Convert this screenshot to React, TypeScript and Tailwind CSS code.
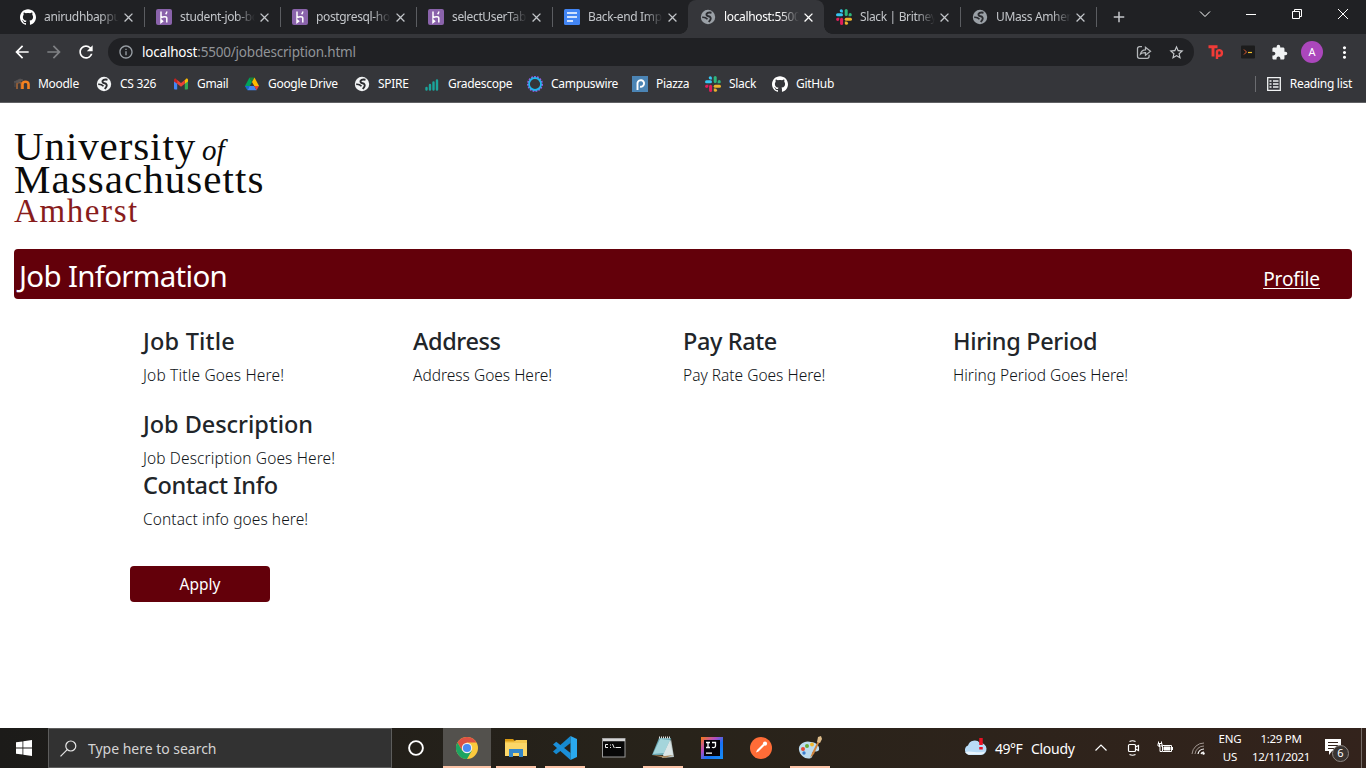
import React from "react";
import { MdArrowBack, MdArrowForward, MdRefresh, MdInfoOutline, MdStarBorder, MdExtension, MdMoreVert, MdClose, MdAdd } from "react-icons/md";
import { SiGithub } from "react-icons/si";

function Globe({ className = "" }: { className?: string }) {
  return (
    <svg viewBox="0 0 16 16" className={"size-4 shrink-0 " + className}>
      <circle cx="8" cy="8" r="7.2" fill="currentColor" />
      <path d="M11.500 3.800Q7.500 3 6.500 5q-.3 1.800 2 2.300 3 .7 2 3.200L8.800 13" fill="none" stroke="#2b2c30" strokeWidth="1.900" />
      <path d="M2.200 8.300q3.300-.3 5.300 2" fill="none" stroke="#2b2c30" strokeWidth="1.700" />
    </svg>
  );
}
function Heroku() {
  return (
    <svg viewBox="0 0 16 16" className="size-4 shrink-0">
      <rect width="16" height="16" rx="2" fill="#8a63ab" />
      <path d="M5 2.500v6.200c1.700-.8 5.800-1.700 5.800.4v4.400M10.800 2.500c0 1.200-.5 2-1.200 2.800M5 10.800v2.700l1.600-1.350z" fill="none" stroke="#fff" strokeWidth="1.5" />
    </svg>
  );
}
function Docs() {
  return (
    <svg viewBox="0 0 16 16" className="size-4 shrink-0">
      <rect width="16" height="16" rx="1.5" fill="#4285f4" />
      <path d="M3 4h10M3 8h10M3 12h6" stroke="#fff" strokeWidth="1.7" />
    </svg>
  );
}
function Slack() {
  return (
    <svg viewBox="0 0 16 16" className="size-4 shrink-0">
      <g fill="#36c5f0"><rect x="0" y="4.3" width="7" height="3" rx="1.5" /><path d="M6.900 3.400V1.700a1.600 1.600 0 1 0-1.600 1.700z" /></g>
      <g fill="#2eb67d"><rect x="8.7" y="0" width="3" height="7" rx="1.5" /><path d="M12.600 7.300h1.700a1.600 1.600 0 1 0-1.700-1.600z" /></g>
      <g fill="#ecb22e"><rect x="8.7" y="8.7" width="7.3" height="3" rx="1.5" /><path d="M8.800 12.600v1.700a1.600 1.600 0 1 0 1.600-1.700z" /></g>
      <g fill="#e01e5a"><rect x="4.1" y="8.7" width="3" height="7.3" rx="1.5" /><path d="M3.300 8.700H1.600a1.600 1.600 0 1 0 1.700 1.600z" /></g>
    </svg>
  );
}
function Moodle() {
  return (
    <svg viewBox="0 0 16 16" className="size-4 shrink-0">
      <path d="M3 13V8.500a2 2 0 0 1 4.500 0V13" fill="none" stroke="#8d5c38" strokeWidth="2" />
      <path d="M8.500 13V8.300c0-3.400 6-3.400 6 0V13" fill="none" stroke="#f48120" strokeWidth="2.600" />
      <path d="M0 6l6-3 3 1-5 2.500zM1 6v5" fill="#595656" stroke="#595656" strokeWidth=".8" />
    </svg>
  );
}
function Gmail() {
  return (
    <svg viewBox="0 0 16 16" className="size-4 shrink-0">
      <path d="M1 4v8.600c0 .5.400.9.900.9h2.300V7.200z" fill="#4285f4" />
      <path d="M15 4v8.600c0 .5-.4.9-.9.9h-2.300V7.200z" fill="#34a853" />
      <path d="M1 4v1.400l3.200 2.400V4.200L3.200 3C2.200 2.100 1 2.800 1 4z" fill="#c5221f" />
      <path d="M15 4v1.400l-3.200 2.400V4.200l1-1.200C13.800 2.100 15 2.800 15 4z" fill="#fbbc04" />
      <path d="M4.200 7.800V4L8 6.900 11.800 4v3.800L8 10.700z" fill="#ea4335" />
    </svg>
  );
}
function Drive() {
  return (
    <svg viewBox="0 0 16 16" className="size-4 shrink-0">
      <path d="M5.500 1.500 8 5.900 3.500 14.300 1 10z" fill="#00a35a" />
      <path d="M5.500 1.500h5L8 5.900z" fill="#188038" />
      <path d="M10.500 1.500 15 10h-4.700L8 5.900z" fill="#ffba00" />
      <path d="M1 10h4.700l-2.200 4.300z" fill="#1967d2" />
      <path d="M5.700 10h4.600l2.200 4.300h-9z" fill="#4285f4" />
      <path d="M10.300 10H15l-2.500 4.300z" fill="#ea4335" />
    </svg>
  );
}
function Gradescope() {
  return (
    <svg viewBox="0 0 16 16" className="size-4 shrink-0">
      <path d="M2.500 13.500v-1.500M6 13.500V9M9.500 13.500V6.500M13 13.500v-9" stroke="#1ba59c" strokeWidth="2.400" strokeLinecap="round" />
    </svg>
  );
}
function Campuswire() {
  return (
    <svg viewBox="0 0 16 16" className="size-4 shrink-0">
      <circle cx="8" cy="8" r="7" fill="none" stroke="#9a5be8" strokeWidth="2" strokeDasharray="1.700 1.200" />
      <circle cx="8" cy="8" r="6" fill="none" stroke="#21b6ed" strokeWidth="1.800" />
    </svg>
  );
}
function Piazza() {
  return (
    <svg viewBox="0 0 16 16" className="size-4 shrink-0">
      <rect width="16" height="16" fill="#4b84b4" />
      <path d="M5.500 14V7a3.300 3.300 0 1 1 2.500 3.700" fill="none" stroke="#fff" strokeWidth="1.900" />
    </svg>
  );
}

type TabProps = { icon: React.ReactNode; title: string; active?: boolean; sep?: boolean };
function Tab({ icon, title, active, sep }: TabProps) {
  return (
    <div className={"relative flex h-[34px] w-[136px] shrink-0 items-center pl-3 " + (active ? "rounded-t-lg bg-[#35363a]" : "")}>
      {icon}
      <span className={"ml-2 w-[75px] overflow-hidden whitespace-nowrap text-[12px] leading-4 tracking-[-0.350px] [mask-image:linear-gradient(to_right,#000_75%,transparent)] " + (active ? "text-white" : "text-[#c3c6ca]")}>{title}</span>
      <MdClose className={"ml-[2px] size-[15px] shrink-0 " + (active ? "text-white" : "text-[#c3c6ca]")} />
      {sep && <span className="absolute right-[-1px] top-[7px] h-5 w-px bg-[#5b5d61]" />}
      {active && (
        <>
          <span className="absolute -left-2 bottom-0 size-2 bg-[radial-gradient(circle_at_0_0,transparent_7.500px,#35363a_8px)]" />
          <span className="absolute -right-2 bottom-0 size-2 bg-[radial-gradient(circle_at_100%_0,transparent_7.500px,#35363a_8px)]" />
        </>
      )}
    </div>
  );
}

function Bookmark({ icon, label, w }: { icon: React.ReactNode; label: string; w: string }) {
  return (
    <div className={"flex shrink-0 items-center gap-2 whitespace-nowrap text-[12px] leading-4 text-white " + w}>
      {icon}
      <span className="tracking-[-0.3px]">{label}</span>
    </div>
  );
}

function Browser() {
  return (
    <header>
      <div className="flex h-[34px] bg-[#202124] pl-2">
        <Tab icon={<SiGithub className="size-4 shrink-0 text-white" />} title="anirudhbappu/student" sep />
        <Tab icon={<Heroku />} title="student-job-board" sep />
        <Tab icon={<Heroku />} title="postgresql-horizontal" sep />
        <Tab icon={<Heroku />} title="selectUserTable" sep />
        <Tab icon={<Docs />} title="Back-end Implement" />
        <Tab icon={<Globe className="text-[#9aa0a6]" />} title="localhost:5500/job" active />
        <Tab icon={<Slack />} title="Slack | Britney Spears" sep />
        <Tab icon={<Globe className="text-[#9aa0a6]" />} title="UMass Amherst" sep />
        <div className="flex w-[46px] items-center justify-center text-[#c3c6ca]"><MdAdd className="size-[18px]" /></div>
        <div className="ml-auto flex h-7 items-center text-white">
          <svg viewBox="0 0 12 12" className="mr-[35px] size-3" fill="none" stroke="currentColor"><path d="m1 3.500 5 5 5-5" /></svg>
          <svg viewBox="0 0 10 10" className="mr-9 size-[10px]" fill="none" stroke="currentColor"><path d="M0 5.500h10" /></svg>
          <svg viewBox="0 0 10 10" className="mr-9 size-[10px]" fill="none" stroke="currentColor"><path d="M.500 2.500h7v7h-7zM2.500 2.500v-2h7v7h-2" /></svg>
          <svg viewBox="0 0 10 10" className="mr-[18px] size-[10px]" fill="none" stroke="currentColor"><path d="m0 0 10 10M10 0 0 10" /></svg>
        </div>
      </div>
      <div className="flex h-[34px] items-center bg-[#35363a] pt-0.5 pl-[12px]">
        <MdArrowBack className="size-[20px] text-white" />
        <MdArrowForward className="ml-[12px] size-[20px] text-[#7f8184]" />
        <MdRefresh className="ml-[12px] size-5 text-white" />
        <div className="ml-3 flex h-7 w-[1086px] items-center rounded-full bg-[#202124] pl-[10px]">
          <MdInfoOutline className="size-4 text-[#9aa0a6]" />
          <span className="ml-2 whitespace-nowrap text-[13.500px] leading-5 tracking-[-0.200px] text-[#919498]"><span className="text-white">localhost</span>:5500/jobdescription.html</span>
          <svg viewBox="0 0 16 16" className="mr-4 ml-auto size-4" fill="none" stroke="#b4b7ba" strokeWidth="1.300"><path d="M6 2.700H3.500a2 2 0 0 0-2 2v7.600a2 2 0 0 0 2 2h7.600a2 2 0 0 0 2-2v-1.500M4.500 10c.6-2.900 2.300-4.100 5-4.200V3.300L14.500 7.300l-5 3.900V8.600C7.400 8.500 5.800 8.900 4.500 10z" /></svg>
          <MdStarBorder className="mr-[9px] size-[17px] text-[#c6c9cc]" />
        </div>
        <svg viewBox="0 0 16 16" className="ml-[14px] size-4" fill="none" stroke="#f03b37" strokeWidth="2.900"><path d="M.500 2.700h9M5 2.700v9.800" /><path d="M9 15V7.800c0-2.400 4.900-2.400 4.900 1.100 0 3.300-3.300 3.400-4.900 2" strokeWidth="2.400" /></svg>
        <svg viewBox="0 0 16 16" className="ml-4 size-4"><rect x="1" y="1.5" width="14" height="13" rx="1" fill="#1c1c1c" /><path d="m4 5.500 2.500 2.500L4 10.500" fill="none" stroke="#e05a2e" /><path d="M8 8.500h4" stroke="#f5c32c" strokeWidth="1.200" /></svg>
        <MdExtension className="ml-[15px] size-[17px] text-[#f1f3f4]" />
        <span className="ml-[13px] flex size-[22px] items-center justify-center rounded-full bg-[#ab47bc] text-[11px] text-white">A</span>
        <MdMoreVert className="ml-3 size-[19px] text-white" />
      </div>
      <div className="flex h-[35px] items-center border-b border-[#606164] bg-[#35363a] pb-[3px] pl-[14px]">
        <Bookmark w="w-[82px]" icon={<Moodle />} label="Moodle" />
        <Bookmark w="w-[77px]" icon={<Globe className="text-[#f1f3f4]" />} label="CS 326" />
        <Bookmark w="w-[71px]" icon={<Gmail />} label="Gmail" />
        <Bookmark w="w-[110px]" icon={<Drive />} label="Google Drive" />
        <Bookmark w="w-[70px]" icon={<Globe className="text-[#f1f3f4]" />} label="SPIRE" />
        <Bookmark w="w-[103px]" icon={<Gradescope />} label="Gradescope" />
        <Bookmark w="w-[105px]" icon={<Campuswire />} label="Campuswire" />
        <Bookmark w="w-[73px]" icon={<Piazza />} label="Piazza" />
        <Bookmark w="w-[67px]" icon={<Slack />} label="Slack" />
        <Bookmark w="w-[80px]" icon={<SiGithub className="size-4 text-white" />} label="GitHub" />
        <div className="ml-auto mr-[14px] flex items-center">
          <span className="h-4 w-px bg-[#6b6c70]" />
          <svg viewBox="0 0 16 16" className="mr-2 ml-[10px] size-4" fill="none" stroke="#f1f3f4" strokeWidth="1.300"><path d="M1.700 1.700h12.600v12.600H1.700z" /><path d="M3.500 5h2M7 5h5.500M3.500 8h2M7 8h5.500M3.500 11h2M7 11h5.500" /></svg>
          <span className="whitespace-nowrap text-[12px] leading-4 tracking-[-0.280px] text-white">Reading list</span>
        </div>
      </div>
    </header>
  );
}

function Field({ title, text, titleTracking = "", tracking = "" }: { title: string; text: string; titleTracking?: string; tracking?: string }) {
  return (
    <section className="w-[270px] whitespace-nowrap">
      <h2 className={"mb-[7px] text-[23.500px] leading-[29px] font-medium " + titleTracking}>{title}</h2>
      <p className={"pb-px text-[15.500px] leading-6 font-light text-[#101418] " + tracking}>{text}</p>
    </section>
  );
}

function Page() {
  return (
    <main className="flex-1 overflow-hidden bg-white px-[14px] text-[#212529]">
      <div className="h-[146px] pt-[27px] font-['Liberation_Serif',serif] text-[41px] leading-[33px] text-[#0b0b0b]">
        <div className="h-[33px] whitespace-nowrap tracking-[0.900px]">University<i className="ml-[6px] text-[29px] leading-none tracking-normal">of</i></div>
        <div className="h-[33px] whitespace-nowrap tracking-[1.050px]">Massachusetts</div>
        <div className="text-[33px] leading-[30px] tracking-[1.600px] text-[#881c1c]">Amherst</div>
      </div>
      <div className="flex h-[50px] justify-between rounded-[4px] bg-[#63000a] pr-8 pl-[5px] text-white">
        <h1 className="text-[29.500px] leading-[54px] tracking-[-0.700px]">Job Information</h1>
        <a className="text-[19px] leading-[60px] tracking-[-0.100px] underline underline-offset-2">Profile</a>
      </div>
      <div className="flex pt-7 pl-[129px]">
        <Field title="Job Title" text="Job Title Goes Here!" titleTracking="tracking-[0.200px]" tracking="tracking-[0.170px]" />
        <Field title="Address" text="Address Goes Here!" titleTracking="tracking-[-0.400px]" />
        <Field title="Pay Rate" text="Pay Rate Goes Here!" titleTracking="tracking-[-0.400px]" />
        <Field title="Hiring Period" text="Hiring Period Goes Here!" titleTracking="tracking-[-0.350px]" />
      </div>
      <div className="pt-[22px] pl-[129px]">
        <Field title="Job Description" text="Job Description Goes Here!" titleTracking="tracking-[-0.050px]" tracking="tracking-[0.120px]" />
        <Field title="Contact Info" text="Contact info goes here!" titleTracking="tracking-[-0.350px]" tracking="tracking-[0.080px]" />
      </div>
      <button className="mt-[34px] ml-[116px] h-9 w-[140px] rounded-[4px] bg-[#63000a] pt-px text-[15.500px] text-white">Apply</button>
    </main>
  );
}

function Slot({ children, line, active, w = "w-[49px]" }: { children: React.ReactNode; line?: boolean; active?: boolean; w?: string }) {
  return (
    <div className={"flex h-10 shrink-0 flex-col items-center " + w + (active ? " bg-[#53514d]" : "")}>
      <div className="flex h-[38px] items-center pt-0.5">{children}</div>
      {line && <span className={"h-0.5 bg-[#fbc3a6] " + (active ? "w-full" : "w-10")} />}
    </div>
  );
}

function Taskbar() {
  return (
    <footer className="flex h-10 shrink-0 items-center bg-linear-to-r from-[#1c1b19] via-[#28231a] to-[#33231c] text-white">
      <div className="flex w-12 justify-center">
        <svg viewBox="0 0 16 16" className="size-4" fill="#fff"><path d="M0 2.300 6.500 1.400v6.200H0zM7.300 1.300 16 0v7.600H7.300zM0 8.400h6.500v6.200L0 13.700zM7.300 8.400H16V16l-8.700-1.300z" /></svg>
      </div>
      <div className="flex h-10 w-[344px] items-center border border-[#5d5d5c] bg-[#323232] pl-[11px]">
        <svg viewBox="0 0 17 17" className="size-[17px]" fill="none" stroke="#e8e8e8" strokeWidth="1.200"><circle cx="10.8" cy="6" r="5" /><path d="m7.200 9.600-6.700 6.700" /></svg>
        <span className="ml-[11px] whitespace-nowrap text-[14px] tracking-[-0.020px] text-[#d4d4d4]">Type here to search</span>
      </div>
      <Slot w="w-[51px] pr-[3px]"><svg viewBox="0 0 16 16" className="size-4" fill="none" stroke="#fff" strokeWidth="1.900"><circle cx="8" cy="8" r="6.9" /></svg></Slot>
      <Slot w="w-12" line active>
        <svg viewBox="0 0 22 22" className="size-[22px]">
          <circle cx="11" cy="11" r="11" fill="#fbc93d" />
          <path d="M1.470 5.500A11 11 0 0 1 20.530 5.500H11L6.240 13.750z" fill="#dd5144" />
          <path d="M1.470 5.500A11 11 0 0 0 11 22l4.760-8.250H6.240z" fill="#1da462" />
          <circle cx="11" cy="11" r="5.2" fill="#f1f1f1" /><circle cx="11" cy="11" r="4.1" fill="#4a8af4" />
        </svg>
      </Slot>
      <Slot line>
        <svg viewBox="0 0 24 24" className="size-6"><path d="M1 3h8l2 2v3H1z" fill="#d99a12" /><path d="M1 6h22v14H1z" fill="#fbd768" /><path d="M1 5.500h9l2-1.500h11v3H1z" fill="#f6c94f" /><path d="M5 21v-8h14v8h-4v-4H9v4z" fill="#3487c9" /></svg>
      </Slot>
      <Slot line>
        <svg viewBox="0 0 24 24" className="size-6"><path d="M17.500 0v7L3.200 18.200 0 15.500z" fill="#1689cf" /><path d="M17.500 24v-7L3.200 5.800 0 8.500z" fill="#1b8fd9" /><path d="M17.500 0 24 3v18l-6.500 3z" fill="#2aa9ef" /></svg>
      </Slot>
      <Slot>
        <svg viewBox="0 0 24 20" className="h-5 w-6"><rect x=".5" y=".5" width="22.5" height="18.5" fill="#070707" stroke="#999" /><path d="M1 2h22" stroke="#d5d5d5" strokeWidth="2.500" /><path d="M6 6.500H3.500v3H6M8.500 6.500v1M8.500 9v1M10.500 6l1.800 4M13.500 9.500H19" fill="none" stroke="#eee" strokeWidth="1" /></svg>
      </Slot>
      <Slot line>
        <svg viewBox="0 0 24 24" className="size-6"><path d="M20 3l3 18-12 1z" fill="#b8c4c4" /><path d="M8 2h12l-5 17H1z" fill="#6aa6b1" /><path d="m9 3 10 1-6 13-11 1z" fill="#a4d5db" /><path d="M19 4l3 15-8 2-2-2z" fill="#dbe6e6" /><path d="m1 19 13 1 8-1-8 3z" fill="#a7865a" /><path d="M8 1.500h12" stroke="#e1e4e4" strokeWidth="2" strokeDasharray="1 1" /></svg>
      </Slot>
      <Slot>
        <svg viewBox="0 0 22 22" className="size-[22px]">
          <defs><linearGradient id="ij" x1="0" y1="0" x2="1" y2="1"><stop stopColor="#f97a12" /><stop offset=".35" stopColor="#b44cc0" /><stop offset=".6" stopColor="#1772f6" /><stop offset="1" stopColor="#178ff6" /></linearGradient></defs>
          <rect width="22" height="22" fill="url(#ij)" /><rect x="3" y="3" width="16" height="16" fill="#050208" /><path d="M5 5.500h4M7 5.500v5M5 10.500h4M11 5.500h3.500v3.500c0 1.500-2 2-3.500 1.200M5 16.200h6" fill="none" stroke="#fff" strokeWidth="1.300" />
        </svg>
      </Slot>
      <Slot>
        <svg viewBox="0 0 22 22" className="size-[22px]"><circle cx="11" cy="11" r="11" fill="#ff6c37" /><path d="m6 15.500 1-2.500 6-6 1.500 1.500-6 6z" fill="#fff" /><circle cx="15" cy="6.7" r="2.1" fill="#fff" /></svg>
      </Slot>
      <Slot line>
        <svg viewBox="0 0 24 24" className="size-6"><path d="M1 14C0 8 7 4 13 6c5 0 9 4 8 8-1 2-4 1-6 2-2 2 1 4-2 6C8 24 2 20 1 14z" fill="#bcdcef" /><circle cx="5" cy="13" r="2" fill="#e34834" /><circle cx="9" cy="10" r="2" fill="#67ac3b" /><circle cx="14" cy="8.5" r="1.9" fill="#f1b72c" /><circle cx="6" cy="17" r="1.7" fill="#3c7fd0" /><path d="m12 22 2-5 6-12 1.500 1-5.500 12z" fill="#cf843d" /><path d="m19 6 1-5 3-1 1 3-2 4z" fill="#dfbd8a" /></svg>
      </Slot>
      <div className="ml-auto flex h-10 items-center">
        <svg viewBox="0 0 24 18" className="mb-0.5 h-[18px] w-6"><path d="M6 17a5 5 0 0 1-1-9.500A7 7 0 0 1 17 5a6 6 0 0 1 1 12z" fill="#b9dcf7" /><path d="M5 16.500h13a4.500 4.500 0 0 0 4-3C15 16 8 12 2 14z" fill="#eaf5fd" /><path d="M18 0v7M18 9v2.500" stroke="#e81123" strokeWidth="3.500" /></svg>
        <span className="ml-2 w-9 whitespace-nowrap pt-px text-[14px] tracking-[-0.500px]">49°F</span>
        <span className="w-[64px] whitespace-nowrap pt-px text-[14px] tracking-[-0.300px]">Cloudy</span>
        <svg viewBox="0 0 12 12" className="size-3" fill="none" stroke="#fff" strokeWidth="1.200"><path d="m.500 8.500 5.500-5.500 5.500 5.500" /></svg>
        <svg viewBox="0 0 16 16" className="ml-[18px] size-4" fill="none" stroke="#fff" strokeWidth="1.200"><rect x="3.5" y="4.5" width="7" height="7" rx="1" /><path d="m10.500 7 3-1.500v5l-3-1.500M4.500 1.500q3-1.500 6 0M4.500 14.500q3 1.500 6 0" /></svg>
        <svg viewBox="0 0 16 16" className="ml-4 size-4" fill="none" stroke="#fff"><path d="M5.500 5.500h9v6h-9zM2.500 4v3M1 3.500h4v2.500H1zM3 7v4.500h2M1.500 1.500V3M4.500 1.500V3M15.500 7v3" /><path d="M7 7h6v3H7z" fill="#fff" /></svg>
        <svg viewBox="0 0 14 14" className="ml-[18px] size-[14px]" fill="none"><g stroke="#a09690" strokeWidth="1"><path d="M1 13A12 12 0 0 1 13 2" /><path d="M4 13a9 9 0 0 1 9-8" /></g><path d="M7 13a6 6 0 0 1 6-5M10 13a3 3 0 0 1 3-2" stroke="#fff" strokeWidth="1.200" /><circle cx="12.5" cy="12.5" r="1.2" fill="#fff" /></svg>
        <div className="ml-[11px] w-7 text-center text-[11.500px] leading-[18px] tracking-[-0.200px]">ENG<br />US</div>
        <div className="ml-[6px] w-[62px] whitespace-nowrap text-center text-[11.500px] leading-[18px] tracking-[-0.300px]">1:29 PM<br />12/11/2021</div>
        <div className="relative ml-[13px] h-7 w-[36px]">
          <svg viewBox="0 0 26 26" className="size-[26px]"><path d="M0 5h16v12H7l-3 4v-4H0z" fill="#fff" /><path d="M3 8.500h10M3 11.500h10M3 14.500h7" stroke="#33231c" /></svg>
          <span className="absolute left-[7px] top-[11px] flex size-[17px] items-center justify-center rounded-full border border-[#8e8783] bg-[#3a3431] text-[11px]">6</span>
        </div>
        <span className="mr-1 h-10 w-px bg-[#756c67]" />
      </div>
    </footer>
  );
}

export default function App() {
  return (
    <div className="flex h-[768px] w-[1366px] flex-col overflow-hidden bg-white font-['Noto_Sans','Open_Sans',sans-serif]">
      <Browser />
      <Page />
      <Taskbar />
    </div>
  );
}
